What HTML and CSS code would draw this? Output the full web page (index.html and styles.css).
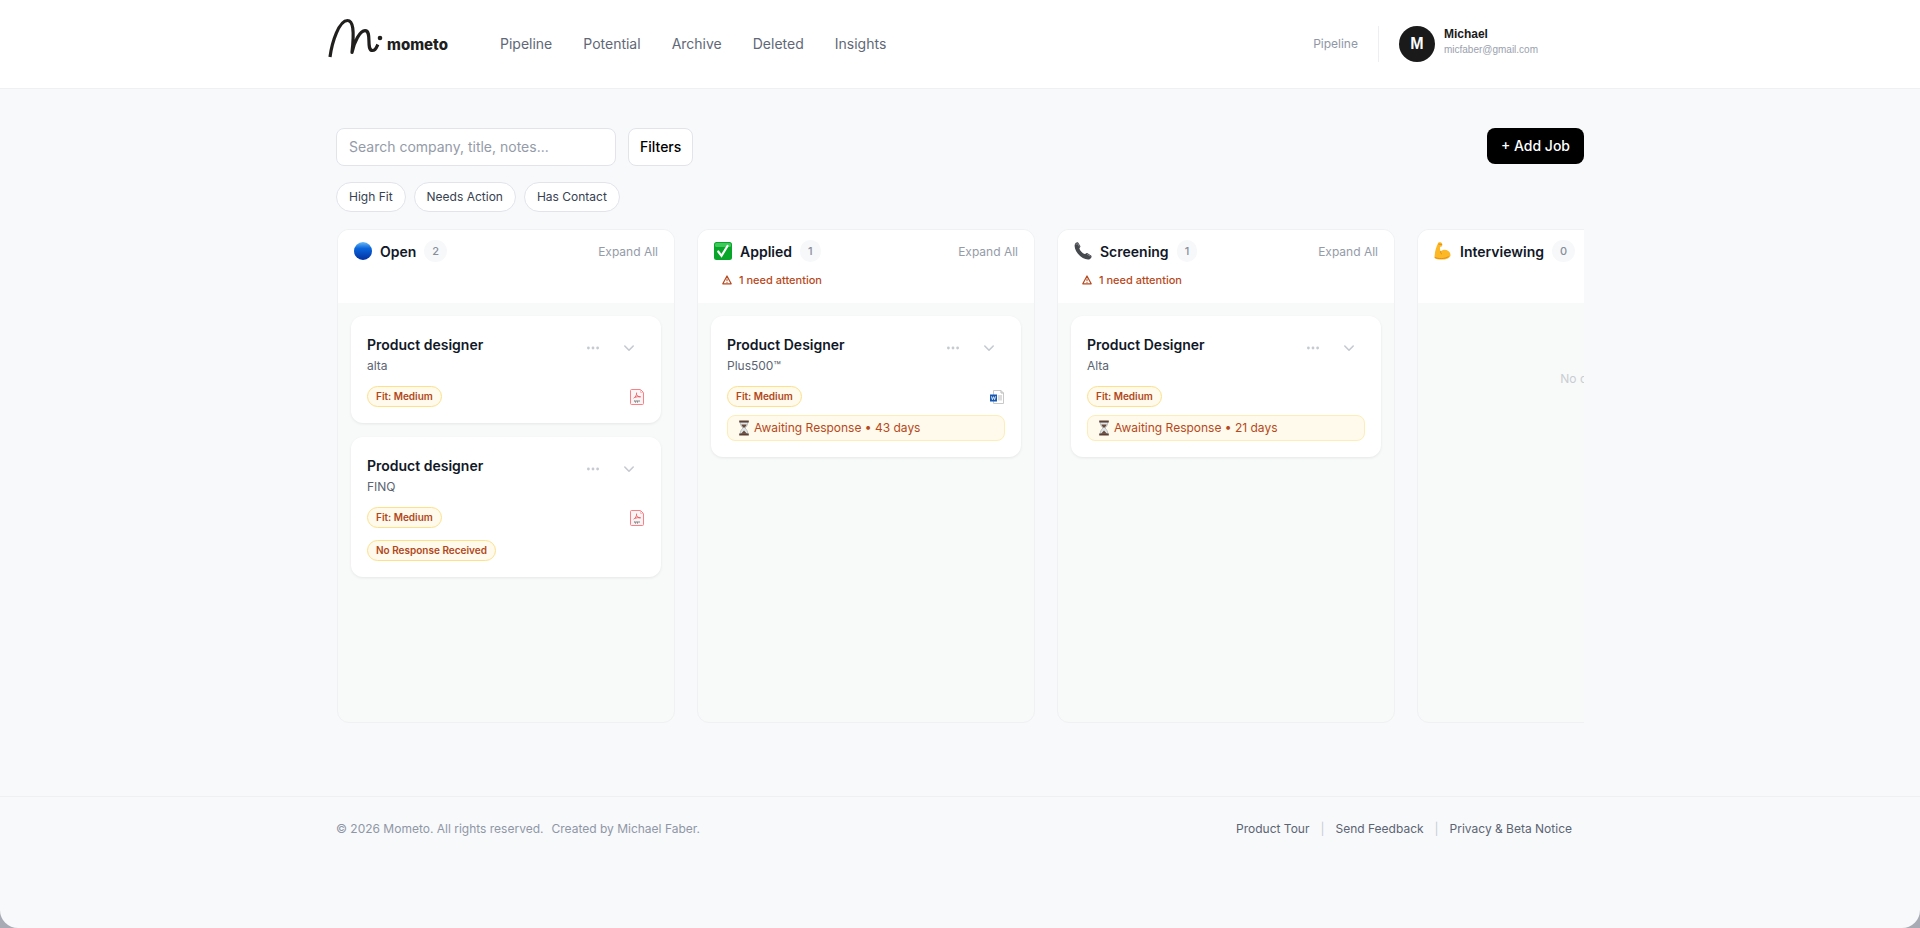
FILE: index.html
```html
<!DOCTYPE html>
<html lang="en">
<head>
    <meta charset="UTF-8">
    <meta name="viewport" content="width=device-width, initial-scale=1.0">
    <title>Mometo - Pipeline</title>
    <link rel="stylesheet" href="styles.css">
</head>
<body>
    <!-- Shared icons -->
    <svg class="sprite" aria-hidden="true">
        <symbol id="dots" viewBox="0 0 14 14">
            <circle cx="2.4" cy="7" r="1.4"/><circle cx="7" cy="7" r="1.4"/><circle cx="11.6" cy="7" r="1.4"/>
        </symbol>
        <symbol id="chevron" viewBox="0 0 14 14">
            <path d="M2.8 5l4.2 4.2L11.2 5" fill="none" stroke="currentColor" stroke-width="1.6" stroke-linecap="round" stroke-linejoin="round"/>
        </symbol>
        <symbol id="warning" viewBox="0 0 12 12">
            <path d="M6 2L10.2 9.800H1.800z" fill="none" stroke="currentColor" stroke-width="1.2" stroke-linejoin="round"/>
            <path d="M6 4.6v2.6M6 8v.9" stroke="currentColor" stroke-width="1"/>
        </symbol>
        <symbol id="pdf" viewBox="0 0 14 16">
            <path d="M1.5.5h9l3 3v11a1 1 0 0 1-1 1h-11a1 1 0 0 1-1-1v-13a1 1 0 0 1 1-1z" fill="#f7f5f5" stroke="#fb7f84"/>
            <path d="M10.5.5v3h3" fill="none" stroke="#fbb0b3" stroke-width=".8"/>
            <path d="M3.600 9.200C5.500 8.300 6.800 6 6.600 3.600M6.600 5.500c.6 1.500 1.900 2.300 4 2.300M5 8.300c1.500-.6 3.500-.8 5.600-.5" fill="none" stroke="#f0474f" stroke-width=".8"/>
            <path d="M4 12h1.600M6.200 12h1.600M8.300 12h1.500M5 13h1M7 13h1" stroke="#555" stroke-width=".9"/>
        </symbol>
        <symbol id="word" viewBox="0 0 14 14">
            <path d="M3.500.5h7.500l2.500 2.500v10.500h-10z" fill="#fff" stroke="#c9c9c9"/>
            <path d="M11 .5v2.500h2.500" fill="none" stroke="#bbb"/>
            <path d="M8 5h4v5.500H8z" fill="#dcdcdc"/>
            <path d="M0 4.500h7v7H0z" fill="#1659b5"/>
            <path d="M1.400 6.300l1 3.400 1.100-3 1.100 3 1-3.400" fill="none" stroke="#fff" stroke-width=".8"/>
        </symbol>
        <symbol id="hourglass" viewBox="0 0 12 16">
            <path d="M2.200 2h7.600c0 3-1.200 4.500-2.800 6 1.600 1.500 2.800 3 2.800 6H2.200c0-3 1.200-4.500 2.800-6C3.400 6.500 2.200 5 2.200 2z" fill="#dfe5e8" stroke="#a5adb1" stroke-width=".7"/>
            <path d="M3.300 4.500h5.400C8.200 6 7 7 6 8 5 7 3.800 6 3.300 4.500zM6 10.500l3 3.300H3z" fill="#6b4a3b"/>
            <path d="M1.200.5h9.600v1.900H1.200zM1.200 13.600h9.600v1.900H1.200z" fill="#5c4037"/>
        </symbol>
    </svg>

    <div class="page">
        <header class="header">
            <div class="header-inner">
                <a class="brand" href="#">
                    <svg class="brand-mark" viewBox="0 0 56 52" aria-hidden="true">
                        <path d="M2 39C4 24 11 2.500 19.500 2.500C25 2.500 26.500 12 24 34.500C26 24 32 12.700 37 12.700C44.500 12.700 37.500 32.500 44.500 32.500C47.500 32.500 48.500 29.500 49.800 26.500" fill="none" stroke="#211f1e" stroke-width="3.200" stroke-linejoin="round"/>
                        <circle cx="52" cy="20" r="2.300" fill="#211f1e"/>
                    </svg>
                    <span class="brand-name">mometo</span>
                </a>
                <nav class="nav">
                    <a href="#">Pipeline</a>
                    <a href="#">Potential</a>
                    <a href="#">Archive</a>
                    <a href="#">Deleted</a>
                    <a href="#">Insights</a>
                </nav>
                <div class="account">
                    <span class="current-page">Pipeline</span>
                    <div class="user">
                        <div class="avatar">M</div>
                        <div>
                            <div class="user-name">Michael</div>
                            <div class="user-email">micfaber@gmail.com</div>
                        </div>
                    </div>
                </div>
            </div>
        </header>

        <main class="main">
            <div class="toolbar">
                <input class="search" type="text" placeholder="Search company, title, notes..." aria-label="Search jobs">
                <button class="btn-filters" type="button">Filters</button>
                <button class="btn-add" type="button">+ Add Job</button>
            </div>

            <div class="chips">
                <button class="chip" type="button">High Fit</button>
                <button class="chip" type="button">Needs Action</button>
                <button class="chip" type="button">Has Contact</button>
            </div>

            <div class="board">
                <section class="column">
                    <div class="column-header">
                        <div class="column-title">
                            <svg class="emoji" viewBox="0 0 18 18" aria-hidden="true">
                                <defs>
                                    <linearGradient id="blue" x1="0" y1="0" x2="0" y2="1">
                                        <stop offset="0" stop-color="#69b9f5"/><stop offset=".35" stop-color="#0a66dc"/><stop offset="1" stop-color="#0330a0"/>
                                    </linearGradient>
                                </defs>
                                <circle cx="9" cy="9" r="9" fill="url(#blue)"/>
                            </svg>
                            <h2>Open</h2>
                            <span class="count">2</span>
                            <button class="expand" type="button">Expand All</button>
                        </div>
                    </div>
                    <div class="cards">
                        <article class="card">
                            <div class="card-top">
                                <div class="card-text">
                                    <h3>Product designer</h3>
                                    <p>alta</p>
                                </div>
                                <button class="icon-btn" type="button" aria-label="More"><svg><use href="#dots"/></svg></button>
                                <button class="icon-btn" type="button" aria-label="Expand"><svg><use href="#chevron"/></svg></button>
                            </div>
                            <div class="card-row">
                                <span class="badge">Fit: Medium</span>
                                <svg class="file"><use href="#pdf"/></svg>
                            </div>
                        </article>
                        <article class="card">
                            <div class="card-top">
                                <div class="card-text">
                                    <h3>Product designer</h3>
                                    <p>FINQ</p>
                                </div>
                                <button class="icon-btn" type="button" aria-label="More"><svg><use href="#dots"/></svg></button>
                                <button class="icon-btn" type="button" aria-label="Expand"><svg><use href="#chevron"/></svg></button>
                            </div>
                            <div class="card-row">
                                <span class="badge">Fit: Medium</span>
                                <svg class="file"><use href="#pdf"/></svg>
                            </div>
                            <div class="card-row">
                                <span class="badge">No Response Received</span>
                            </div>
                        </article>
                    </div>
                </section>

                <section class="column">
                    <div class="column-header">
                        <div class="column-title">
                            <svg class="emoji" viewBox="0 0 18 18" aria-hidden="true">
                                <rect width="18" height="18" rx="2.500" fill="#08a52a"/>
                                <rect x="1" y="1" width="16" height="4" rx="1.500" fill="#3ec95a"/>
                                <path d="M4.200 9.500l3.300 4.300L13.500 4" fill="none" stroke="#fff" stroke-width="2.200" stroke-linecap="round"/>
                            </svg>
                            <h2>Applied</h2>
                            <span class="count">1</span>
                            <button class="expand" type="button">Expand All</button>
                        </div>
                        <div class="attention"><svg><use href="#warning"/></svg>1 need attention</div>
                    </div>
                    <div class="cards">
                        <article class="card">
                            <div class="card-top">
                                <div class="card-text">
                                    <h3>Product Designer</h3>
                                    <p>Plus500™</p>
                                </div>
                                <button class="icon-btn" type="button" aria-label="More"><svg><use href="#dots"/></svg></button>
                                <button class="icon-btn" type="button" aria-label="Expand"><svg><use href="#chevron"/></svg></button>
                            </div>
                            <div class="card-row">
                                <span class="badge">Fit: Medium</span>
                                <svg class="file"><use href="#word"/></svg>
                            </div>
                            <div class="waiting"><svg><use href="#hourglass"/></svg>Awaiting Response • 43 days</div>
                        </article>
                    </div>
                </section>

                <section class="column">
                    <div class="column-header">
                        <div class="column-title">
                            <svg class="emoji" viewBox="0 0 18 18" aria-hidden="true">
                                <path d="M.8 2.500C1.500.8 3.200-.2 4.300.7L6.300 4c.5 1-.8 1.700-.9 2.500.6 2.300 3 4.800 5.300 5.600.9 0 1.500-1.400 2.500-1l3.900 2.300c1.300 1.100-.3 3.400-2 4C8.500 18.500-.8 9 .8 2.500z" fill="#45494d"/>
                                <path d="M2 2.600c.4-.8 1.200-1.100 1.800-.8l1.300 2.300M13.300 12.300l2.800 1.700" fill="none" stroke="#8b9095" stroke-width=".9" stroke-linecap="round"/>
                            </svg>
                            <h2>Screening</h2>
                            <span class="count">1</span>
                            <button class="expand" type="button">Expand All</button>
                        </div>
                        <div class="attention"><svg><use href="#warning"/></svg>1 need attention</div>
                    </div>
                    <div class="cards">
                        <article class="card">
                            <div class="card-top">
                                <div class="card-text">
                                    <h3>Product Designer</h3>
                                    <p>Alta</p>
                                </div>
                                <button class="icon-btn" type="button" aria-label="More"><svg><use href="#dots"/></svg></button>
                                <button class="icon-btn" type="button" aria-label="Expand"><svg><use href="#chevron"/></svg></button>
                            </div>
                            <div class="card-row">
                                <span class="badge">Fit: Medium</span>
                            </div>
                            <div class="waiting"><svg><use href="#hourglass"/></svg>Awaiting Response • 21 days</div>
                        </article>
                    </div>
                </section>

                <section class="column">
                    <div class="column-header">
                        <div class="column-title">
                            <svg class="emoji" viewBox="0 0 18 18" aria-hidden="true">
                                <path d="M4.300.8C5.500-.2 7.300.4 8 1.500l.2 2.300c-.3.900-1.200 1.200-2 .9-.4 1.500-.3 3.300.4 4.800 1.800-2 5.200-2.300 7.300-.8 2 1.300 3.200 3.600 2.300 5.600-1.200 2.500-5 3.300-8.700 3.300-2.700 0-6-.3-6.800-1.500C.2 11 2.300 4.500 4.300.8z" fill="#fdb827"/>
                                <path d="M6.600 9.500c-.2 1 .2 1.900 1 2.500M1 15.500c3 1.500 9.500 1.700 13.300-.7M4.800 2.200l3 .2" fill="none" stroke="#e08a12" stroke-width=".9" stroke-linecap="round"/>
                            </svg>
                            <h2>Interviewing</h2>
                            <span class="count">0</span>
                        </div>
                    </div>
                    <p class="empty">No cards</p>
                </section>
            </div>
        </main>

        <footer class="footer">
            <div class="footer-inner">
                <div class="copyright">
                    <span>© 2026 Mometo. All rights reserved.</span>
                    <span>Created by Michael Faber.</span>
                </div>
                <div class="footer-links">
                    <a href="#">Product Tour</a>
                    <span>|</span>
                    <a href="#">Send Feedback</a>
                    <span>|</span>
                    <a href="#">Privacy &amp; Beta Notice</a>
                </div>
            </div>
        </footer>
    </div>
</body>
</html>
```
FILE: styles.css
```css
* {
    margin: 0;
    padding: 0;
    box-sizing: border-box;
}

html {
    background: #a9abb4;
}

body {
    font-family: 'Inter', -apple-system, BlinkMacSystemFont, 'Segoe UI', sans-serif;
    font-size: 14px;
    color: #111827;
}

a {
    color: inherit;
    text-decoration: none;
}

button,
input {
    font: inherit;
    color: inherit;
}

button {
    background: none;
    border: none;
    cursor: pointer;
}

.sprite {
    display: none;
}

.page {
    min-height: 100vh;
    background: #f8f9fb;
    border-radius: 0 0 18px 18px;
    overflow: hidden;
}

/* Header */
.header {
    background: #fff;
    border-bottom: 1px solid #eef0f2;
}

.header-inner {
    max-width: 1280px;
    height: 88px;
    margin: 0 auto;
    padding: 0 62px 0 8px;
    display: flex;
    align-items: center;
}

.brand {
    display: flex;
    align-items: center;
    gap: 3px;
}

.brand-mark {
    width: 56px;
    height: 52px;
}

.brand-name {
    font-size: 15px;
    font-weight: 800;
    color: #211f1e;
}

.nav {
    display: flex;
    gap: 31px;
    margin-left: 52px;
    padding-bottom: 2px;
    color: #5f6877;
}

.account {
    display: flex;
    align-items: center;
    gap: 20px;
    margin-left: auto;
}

.current-page {
    padding-bottom: 2px;
    font-size: 12px;
    color: #8f97a6;
}

.user {
    display: flex;
    gap: 9px;
    padding-left: 20px;
    border-left: 1px solid #eceef1;
    font-family: 'Liberation Sans', Arial, sans-serif;
}

.avatar {
    width: 36px;
    height: 36px;
    border-radius: 50%;
    background: #1a1a1a;
    color: #fff;
    font-size: 16px;
    font-weight: 700;
    line-height: 36px;
    text-align: center;
}

.user-name {
    font-size: 12px;
    font-weight: 700;
    line-height: 16px;
    color: #1a1a1a;
}

.user-email {
    font-size: 10px;
    line-height: 16px;
    color: #9aa1ae;
}

/* Toolbar */
.main {
    max-width: 1280px;
    margin: 0 auto;
    padding: 39px 16px 72px;
}

.toolbar {
    display: flex;
    align-items: flex-start;
    gap: 12px;
}

.search {
    width: 280px;
    height: 38px;
    padding: 0 12px 2px;
    background: #fff;
    border: 1px solid #e2e4ea;
    border-radius: 8px;
}

.search::placeholder {
    color: #949ba8;
}

.btn-filters {
    height: 38px;
    padding: 0 11px 2px;
    background: #fff;
    border: 1px solid #e2e4ea;
    border-radius: 8px;
    font-weight: 500;
    color: #000;
}

.btn-add {
    height: 36px;
    margin-left: auto;
    padding: 0 14px 2px;
    background: #000;
    border-radius: 8px;
    font-weight: 500;
    color: #fff;
}

.chips {
    display: flex;
    gap: 8px;
    margin: 16px 0;
}

.chip {
    height: 30px;
    padding: 0 12px 2px;
    background: #fff;
    border: 1px solid #e2e4ea;
    border-radius: 15px;
    font-size: 12px;
    color: #374151;
}

/* Board */
.board {
    display: flex;
    gap: 22px;
    padding: 1px;
    overflow: hidden;
}

.column {
    flex: 0 0 338px;
    min-height: 494px;
    background: #f8faf9;
    border: 1px solid #eff1f3;
    border-radius: 12px;
    overflow: hidden;
}

.column-header {
    min-height: 73px;
    padding: 11px 16px;
    background: #fff;
}

.column-title {
    display: flex;
    align-items: center;
    gap: 8px;
    height: 20px;
}

.emoji {
    width: 18px;
    height: 18px;
}

.column-title h2 {
    font-size: 14px;
    font-weight: 600;
}

.count {
    padding: 0 8px;
    border-radius: 12px;
    background: #f7f8fa;
    font-size: 11px;
    font-weight: 500;
    line-height: 22px;
    color: #868e9c;
}

.expand {
    margin-left: auto;
    font-size: 12px;
    color: #949ba8;
}

.attention {
    display: flex;
    align-items: center;
    gap: 6px;
    margin-top: 11px;
    padding-left: 7px;
    font-size: 11px;
    font-weight: 500;
    line-height: 16px;
    color: #b6481c;
}

.attention svg {
    width: 12px;
    height: 12px;
}

.cards {
    display: grid;
    gap: 14px;
    padding: 13px;
}

.card {
    padding: 16px;
    background: #fff;
    border-radius: 12px;
    box-shadow: 0 1px 3px rgba(0, 0, 0, 0.08);
}

.card-top {
    display: flex;
    gap: 4px;
}

.card-text {
    flex: 1;
}

.card-text h3 {
    font-size: 14px;
    font-weight: 600;
    line-height: 26px;
}

.card-text p {
    font-size: 12px;
    line-height: 16px;
    color: #5b6472;
}

.icon-btn {
    width: 32px;
    height: 32px;
    display: flex;
    align-items: center;
    justify-content: center;
    color: #c5c9d0;
    fill: currentColor;
}

.icon-btn svg {
    width: 14px;
    height: 14px;
}

.card-row {
    display: flex;
    align-items: center;
    justify-content: space-between;
    margin-top: 12px;
}

.badge {
    padding: 0 8px;
    border: 1px solid #fde08a;
    border-radius: 11px;
    background: #fffaeb;
    font-size: 10px;
    font-weight: 600;
    line-height: 19px;
    color: #b0471c;
}

.file {
    width: 14px;
    height: 16px;
    margin-right: 1px;
}

.waiting {
    display: flex;
    align-items: center;
    gap: 4px;
    margin-top: 8px;
    padding: 0 10px;
    border: 1px solid #fdeeb8;
    border-radius: 8px;
    background: #fffaeb;
    font-size: 12px;
    line-height: 24px;
    color: #b6481c;
}

.waiting svg {
    width: 12px;
    height: 16px;
}

.empty {
    padding-top: 68px;
    font-size: 12px;
    line-height: 16px;
    text-align: center;
    color: #c9cdd3;
}

/* Footer */
.footer {
    border-top: 1px solid #eef0f2;
    font-size: 12px;
    line-height: 16px;
}

.footer-inner {
    max-width: 1280px;
    margin: 0 auto;
    padding: 24px 28px 24px 16px;
    display: flex;
    justify-content: space-between;
}

.copyright {
    display: flex;
    gap: 8px;
    color: #8f97a6;
}

.footer-links {
    display: flex;
    gap: 11px;
    color: #5b6472;
}

.footer-links span {
    color: #c9cdd3;
}
```
